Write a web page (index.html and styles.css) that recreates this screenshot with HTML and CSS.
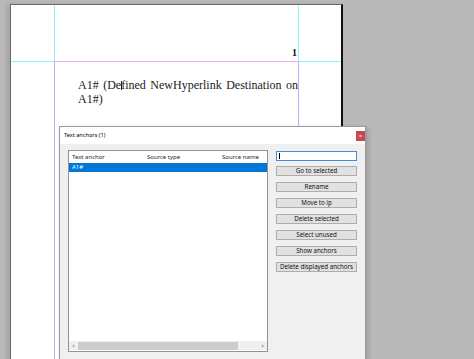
FILE: index.html
```html
<!DOCTYPE html>
<html>
<head>
<meta charset="utf-8">
<title>Text anchors</title>
<link rel="stylesheet" href="styles.css">
</head>
<body>
<div class="desk">
  <div class="sheet">
    <div class="guide v top-v v1"></div>
    <div class="guide v bot-v v1b"></div>
    <div class="guide v top-v v2"></div>
    <div class="guide v bot-v v2b"></div>
    <div class="guide h hl"></div>
    <div class="guide h hm"></div>
    <div class="guide h hr"></div>
    <div class="folio-row"><span class="folio">1</span></div>
    <p class="para">A1# (Defined NewHyperlink Destination on A1#)<span class="tcur"></span></p>
  </div>

  <div class="dialog">
    <div class="titlebar">
      <span class="title">Text anchors (1)</span>
      <span class="close">×</span>
    </div>
    <div class="dbody">
      <div class="list">
        <div class="lhead"><span>Text anchor</span><span>Source type</span><span>Source name</span></div>
        <div class="lrow sel"><span>A1#</span><span></span><span></span></div>
        <div class="lspace"></div>
        <div class="hscroll">
          <span class="arr">‹</span>
          <span class="track"><span class="thumb"></span></span>
          <span class="arr">›</span>
        </div>
      </div>
      <div class="side">
        <div class="tbox"><span class="tcaret"></span></div>
        <button class="btn">Go to selected</button>
        <button class="btn">Rename</button>
        <button class="btn">Move to ip</button>
        <button class="btn">Delete selected</button>
        <button class="btn">Select unused</button>
        <button class="btn">Show anchors</button>
        <button class="btn">Delete displayed anchors</button>
      </div>
    </div>
  </div>
</div>
</body>
</html>
```

FILE: styles.css
```css
* { box-sizing: border-box; }
html, body { margin: 0; padding: 0; }
body {
  width: 474px;
  height: 359px;
  overflow: hidden;
  background: #b9b9b9;
}
.desk {
  position: relative;
  width: 474px;
  height: 359px;
  overflow: hidden;
}

/* page sheet */
.sheet {
  position: absolute;
  left: 10px;
  top: 4px;
  width: 333px;
  height: 420px;
  background: #fff;
  border-left: 1px solid #6a6a6a;
  border-top: 1px solid #6a6a6a;
  border-right: 2px solid #111;
  box-shadow: -3px 0 4px rgba(0,0,0,0.12);
  padding-top: 43px;
}
.guide { position: absolute; }
.guide.v { width: 1px; }
.guide.top-v { top: 0; height: 56px; background: #8ff3f3; }
.guide.bot-v { top: 57px; height: 400px; background: #c9a6f5; }
.v1, .v1b { left: 43px; }
.v2, .v2b { left: 287px; }
.guide.h { top: 56px; height: 1px; }
.hl { left: 0; width: 43px; background: #8ff3f3; }
.hm { left: 43px; width: 245px; background: #f0a8e8; }
.hr { left: 288px; width: 42px; background: #8ff3f3; }

.folio-row {
  height: 10px;
  padding-right: 44px;
  text-align: right;
  font-family: "Liberation Serif", serif;
  font-weight: bold;
  font-size: 10px;
  line-height: 10px;
  color: #111;
}
.para {
  position: relative;
  margin: 20px 0 0 67px;
  width: 220px;
  font-family: "Liberation Serif", serif;
  font-size: 12px;
  line-height: 14px;
  text-align: justify;
  color: #1a1a1a;
}
.tcur {
  position: absolute;
  left: 43px;
  top: 3px;
  width: 1px;
  height: 9px;
  background: #222;
}

/* dialog window */
.dialog {
  position: absolute;
  left: 59px;
  top: 126px;
  width: 307px;
  height: 260px;
  border: 1px solid #9a9a9a;
  background: #f0f0f0;
  box-shadow: 2px 2px 5px rgba(0,0,0,0.18);
  font-family: "Noto Sans", sans-serif;
  color: #000;
}
.titlebar {
  height: 17px;
  background: #fff;
  display: flex;
  justify-content: space-between;
  align-items: flex-start;
  padding-left: 4px;
}
.title {
  font-size: 5.6px;
  line-height: 17px;
}
.close {
  width: 9px;
  height: 10px;
  margin-top: 4px;
  background: #c9474f;
  color: #fff;
  font-size: 6px;
  line-height: 10px;
  text-align: center;
}
.dbody {
  display: grid;
  grid-template-columns: 200px 81px;
  column-gap: 8px;
  padding: 6px 8px 0 8px;
  align-items: start;
}
.list {
  height: 202px;
  background: #fff;
  border: 1px solid #8f9399;
  display: flex;
  flex-direction: column;
  font-size: 6px;
}
.lhead, .lrow {
  display: grid;
  grid-template-columns: 75px 75px 1fr;
  padding-left: 3px;
}
.lhead {
  height: 12px;
  line-height: 12px;
  color: #1e1e1e;
}
.lrow {
  height: 9px;
  line-height: 9px;
}
.lrow.sel {
  background: #0078d7;
  color: #fff;
}
.lspace { flex: 1; }
.hscroll {
  height: 9px;
  display: flex;
  align-items: center;
  background: #f0f0f0;
  margin-bottom: 1px;
}
.arr {
  width: 9px;
  text-align: center;
  font-size: 7px;
  line-height: 9px;
  color: #606060;
}
.track {
  flex: 1;
  height: 8px;
  display: flex;
}
.thumb {
  width: 160px;
  height: 8px;
  background: #cdcdcd;
}
.side {
  display: flex;
  flex-direction: column;
  gap: 6px;
  padding-top: 1px;
}
.tbox {
  height: 10px;
  margin-bottom: -1px;
  background: #fff;
  border: 1px solid #3b8fdb;
  position: relative;
}
.tcaret {
  position: absolute;
  left: 2px;
  top: 1px;
  width: 1px;
  height: 6px;
  background: #000;
}
.btn {
  height: 10px;
  margin: 0;
  padding: 0;
  background: #e1e1e1;
  border: 1px solid #adadad;
  border-radius: 0;
  font-family: "Noto Sans", sans-serif;
  font-size: 6.2px;
  line-height: 8px;
  color: #111;
  text-align: center;
}
```
